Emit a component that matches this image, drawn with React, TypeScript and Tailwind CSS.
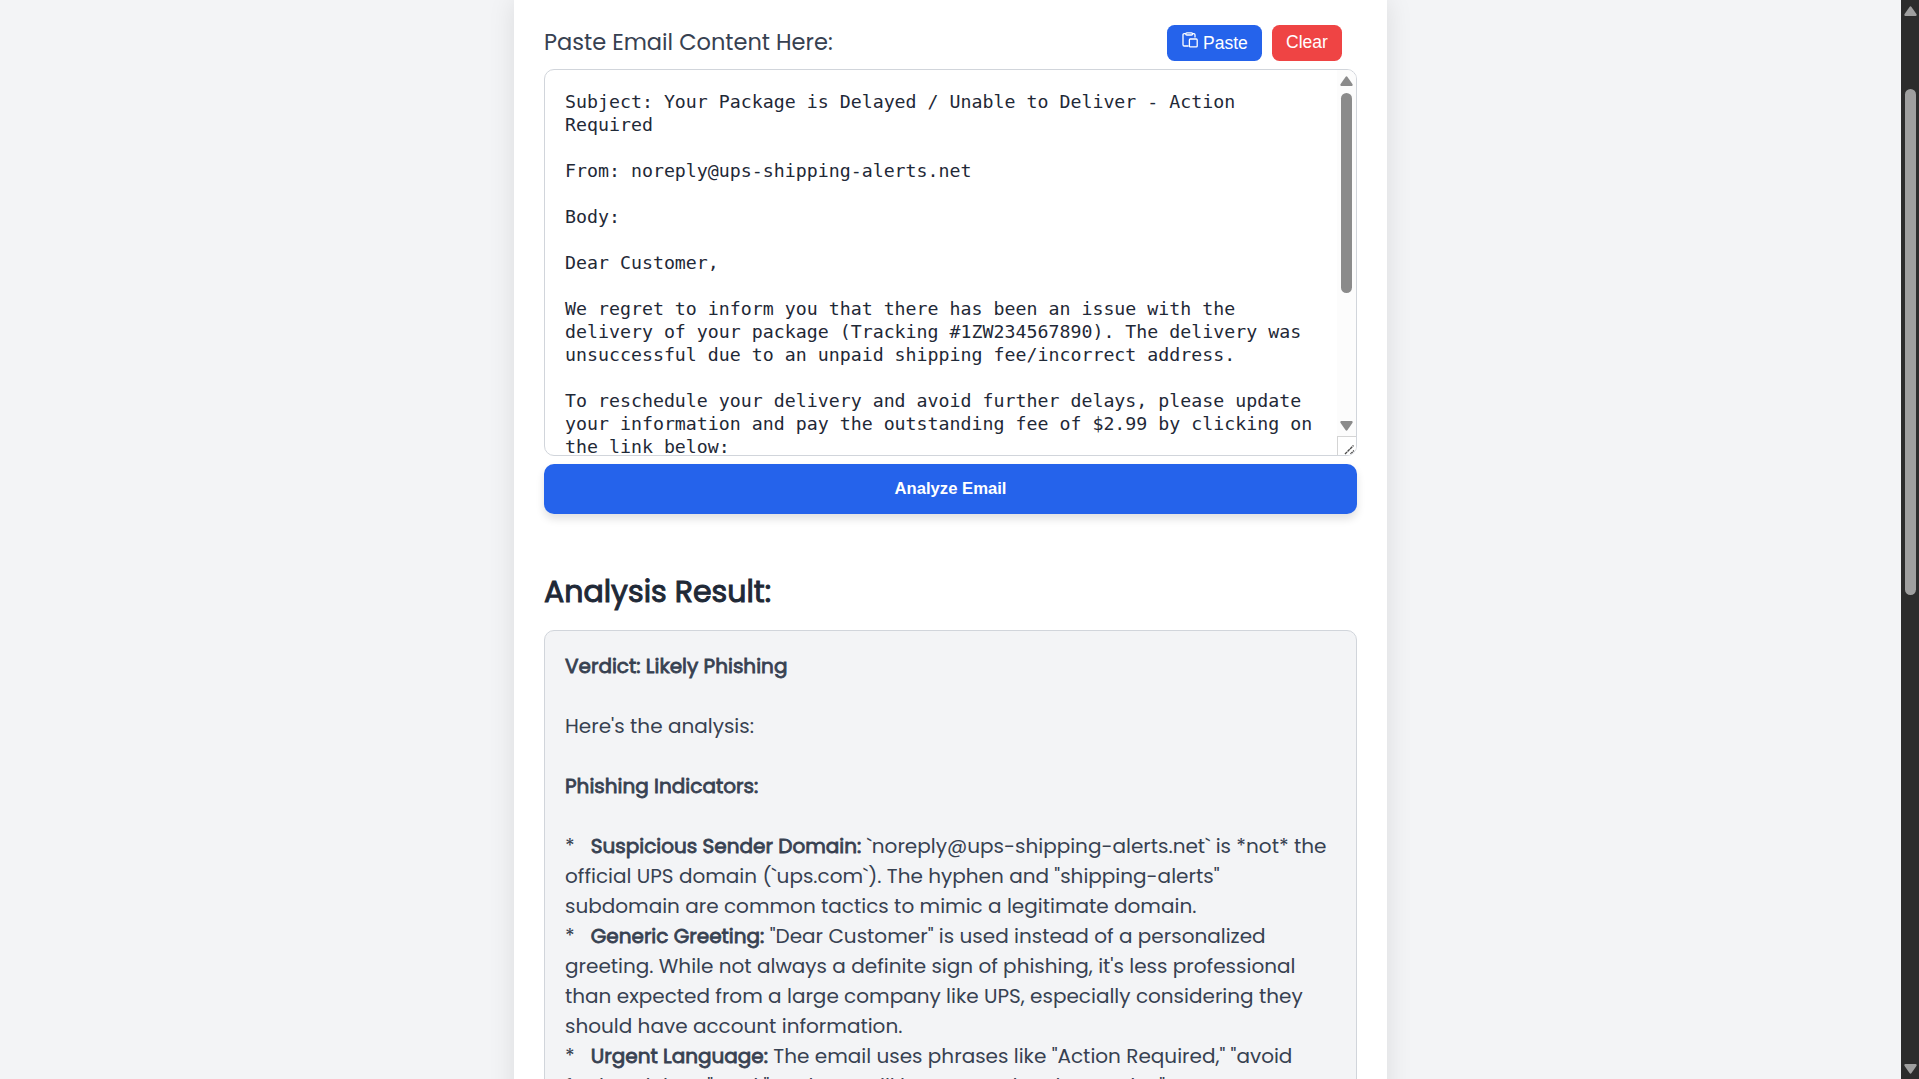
import type { ReactNode } from "react";

const email = `Subject: Your Package is Delayed / Unable to Deliver - Action
Required

From: noreply@ups-shipping-alerts.net

Body:

Dear Customer,

We regret to inform you that there has been an issue with the
delivery of your package (Tracking #1ZW234567890). The delivery was
unsuccessful due to an unpaid shipping fee/incorrect address.

To reschedule your delivery and avoid further delays, please update
your information and pay the outstanding fee of $2.99 by clicking on
the link below:`;

function Strong({ children }: { children: ReactNode }) {
  return <strong className="font-normal [-webkit-text-stroke:0.8px_currentColor]">{children}</strong>;
}

function Arrow({ down = false, className = "" }: { down?: boolean; className?: string }) {
  return (
    <svg width="13" height="10" viewBox="0 0 13 10" className={`shrink-0 ${down ? "rotate-180" : ""} ${className}`}>
      <path d="M5.5 1 Q6.5 -0.4 7.5 1 L12.4 8 Q13.2 10 11.6 10 L1.4 10 Q-0.2 10 0.6 8 Z" fill="currentColor" />
    </svg>
  );
}

function PasteIcon() {
  return (
    <svg width="16" height="16" viewBox="0 0 16 16" fill="none" stroke="white" strokeWidth="1.3" className="mt-[2px] shrink-0">
      <path d="M6.6 14H2.2A1.2 1.2 0 0 1 1 12.8V2.8A1.2 1.2 0 0 1 2.2 1.6h1.4M10.6 1.6h1.2A1.2 1.2 0 0 1 13 2.8V5.6" />
      <rect x="3.7" y="0.8" width="6.9" height="2.2" rx="1.1" />
      <rect x="7.4" y="7" width="7.8" height="7.8" rx="0.9" />
    </svg>
  );
}

export default function App() {
  return (
    <div className="flex h-[1079px] w-full overflow-hidden bg-[#f3f4f6] font-[Poppins,Inter,sans-serif] text-[#374151]">
      <div className="flex min-w-0 flex-1 justify-center">
        <main className="h-[1300px] w-[873px] shrink-0 bg-white px-[30px] pt-[25px] shadow-[0_0_25px_rgba(0,0,0,0.1)]">
          <div className="flex h-9 items-start justify-between pr-[15px]">
            <label className="text-[22.5px] leading-[34px]">Paste Email Content Here:</label>
            <div className="flex gap-[10px] font-['Liberation_Sans',Arial,sans-serif] text-[17.5px] leading-[25px] text-white">
              <button className="flex h-9 w-[95px] rounded-[7.5px] bg-[#2563eb] pt-[5px] pl-[15px]">
                <PasteIcon />
                <span className="mt-px ml-[5px]">Paste</span>
              </button>
              <button className="flex h-9 w-[70px] justify-center rounded-[7.5px] bg-[#ef4444] pt-[5px]">Clear</button>
            </div>
          </div>

          <div className="mt-2 flex h-[387px] overflow-hidden rounded-[10px] border border-[#d1d5db] bg-white">
            <div className="flex-1 overflow-hidden whitespace-pre pt-[20px] pl-[20px] font-['DejaVu_Sans_Mono',monospace] text-[18.26px] leading-[23px] text-[#1f2937]">
              {email}
            </div>
            <div className="flex w-[19px] shrink-0 flex-col items-center bg-[#fcfcfc] pt-[6px] text-[#8b8b8b]">
              <Arrow />
              <div className="mt-[7px] h-[200px] w-[11px] shrink-0 rounded-full bg-[#8b8b8b]" />
              <Arrow down className="mt-[128px]" />
              <div className="mt-[5px] h-5 w-[19px] border-t border-l border-[#d4d4d4] bg-white">
                <svg width="18" height="18" viewBox="0 0 18 18" stroke="#4b4b4b" strokeWidth="1.4" strokeDasharray="3 0.6">
                  <path d="M7 17 L15.5 8.5 M12.5 17 L16 13.5" />
                </svg>
              </div>
            </div>
          </div>

          <button className="mt-2 block h-[50px] w-full rounded-[10px] bg-[#2563eb] pb-px font-['Liberation_Sans',Arial,sans-serif] text-[16.67px] font-bold text-white shadow-[0_5px_8px_rgba(0,0,0,0.12)]">
            Analyze Email
          </button>

          <h2 className="mt-[58px] text-[30px] leading-10 text-[#1f2937]">
            <span className="[-webkit-text-stroke:1px_currentColor]">Analysis Result:</span>
          </h2>

          <section className="mt-[18px] h-[700px] rounded-[10px] border border-[#d1d5db] bg-[#f3f4f6] pt-5 pl-5 text-[20px] leading-[30px] whitespace-pre">
            <p><Strong>Verdict: Likely Phishing</Strong></p>
            <p className="mt-[30px]">Here's the analysis:</p>
            <p className="mt-[30px]"><Strong>Phishing Indicators:</Strong></p>
            <p className="mt-[30px]">
              {"*   "}<Strong>Suspicious Sender Domain:</Strong>{" `noreply@ups-shipping-alerts.net` is *not* the\nofficial UPS domain (`ups.com`). The hyphen and \"shipping-alerts\"\nsubdomain are common tactics to mimic a legitimate domain."}
            </p>
            <p>
              {"*   "}<Strong>Generic Greeting:</Strong>{" \"Dear Customer\" is used instead of a personalized\ngreeting. While not always a definite sign of phishing, it's less professional\nthan expected from a large company like UPS, especially considering they\nshould have account information."}
            </p>
            <p>
              {"*   "}<Strong>Urgent Language:</Strong>{" The email uses phrases like \"Action Required,\" \"avoid\nfurther delays,\" and \"package will be returned to the sender.\""}
            </p>
          </section>
        </main>
      </div>

      <aside className="flex w-[18px] shrink-0 flex-col items-center bg-[#2c2c2c] pt-[6px] pb-[5px] text-[#9f9f9f]">
        <Arrow />
        <div className="mt-[73px] h-[506px] w-[11px] rounded-full bg-[#9f9f9f]" />
        <Arrow down className="mt-auto" />
      </aside>
    </div>
  );
}
